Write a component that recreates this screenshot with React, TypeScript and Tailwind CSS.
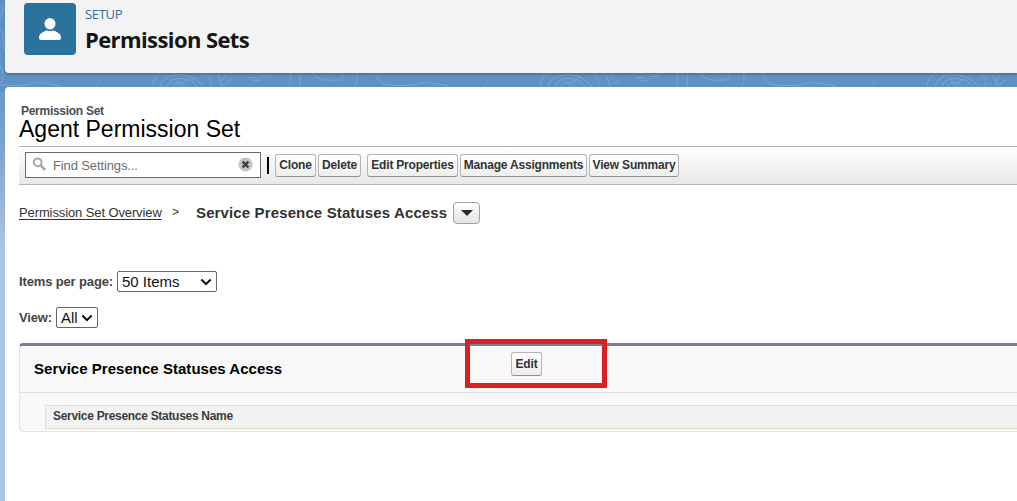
import React from 'react';
import clsx from 'clsx';

const patternTiles = [-104, 284, 671];

const BackgroundPattern = () => (
  <svg className="absolute left-0 top-0" width="1017" height="88" fill="none" stroke="#8db5dc" strokeWidth="1" opacity="0.6">
    {patternTiles.map((x) => (
      <g key={x} transform={`translate(${x} 72)`}>
        <path d="M6 2C8 8 5 11 5 16M17 1C15 6 17 10 16 16" />
        <path d="M28 1C34 8 43 9 54 8C59 7 59 4 58 1" />
        <path d="M72 1C74 6 73 11 70 16" />
        <path d="M90 1C95 8 98 13 105 13C116 14 128 14 137 11C147 10 154 12 165 14" />
        <path d="M205 7C202 9 204 12 200 15" />
        <path d="M256 16C256 9 260 4 264 1M264 16C264 7 274 2 285 3C297 4 303 8 308 16" />
        <path d="M271 16C272 8 280 5 289 7C296 8 299 11 302 16M277 16C277 10 286 8 292 16M280 9L287 15M286 11L294 7" />
        <path d="M312 16C318 11 314 5 309 2M322 2L326 14L336 7M329 4L324 10" />
        <path d="M352 5L359 6M366 5L375 3M357 9L365 8" />
      </g>
    ))}
    <path d="M1 4C5 9 2 15 0 18M0 29C5 35 2 43 5 51M0 66C3 70 4 76 1 84" />
  </svg>
);

interface ButtonProps {
  label: string;
  className?: string;
}

const Button = ({ label, className }: ButtonProps) => (
  <button
    className={clsx(
      'flex shrink-0 items-center justify-center whitespace-nowrap rounded-[3px] border border-[#b5b5b5] border-b-[#8f8f8f] bg-linear-to-b from-white to-[#eeeeee] pb-px text-[12px] font-bold leading-none tracking-[-0.2px] text-[#333333]',
      className
    )}
  >
    {label}
  </button>
);

const Chevron = () => (
  <svg width="12" height="8" viewBox="0 0 12 8" fill="none" stroke="#111111" strokeWidth="2">
    <path d="M1.3 1.5L6 6L10.7 1.5" />
  </svg>
);

const SetupHeader = () => (
  <header className="relative flex h-[73px] rounded-bl-[4px] bg-[#f3f3f3] pl-[19px] pt-[3px] shadow-[0_2px_2px_rgba(70,100,135,0.6)]">
    <div className="flex h-[52px] w-[52px] items-center justify-center rounded-[4px] bg-[#2b739c]">
      <svg width="22" height="22" viewBox="0 0 22 22" fill="white">
        <ellipse cx="11" cy="5.7" rx="5.5" ry="5.7" />
        <path d="M0 19.5C0 15.5 3.4 14.2 7.8 12.2C9.7 13.4 12.3 13.4 14.2 12.2C18.6 14.2 22 15.5 22 19.5C22 21.2 21.3 22 20 22H2C.7 22 0 21.2 0 19.5Z" />
      </svg>
    </div>
    <div className="pl-[9px] font-['Open_Sans',sans-serif]">
      <p className="h-[21px] text-[13px] leading-[22px] tracking-[-0.3px] text-[#2a6f9f]">SETUP</p>
      <h1 className="text-[22px] font-bold leading-[30px] tracking-[-0.6px] text-[#151515]">Permission Sets</h1>
    </div>
  </header>
);

const Toolbar = () => (
  <div className="flex h-[39px] items-start border-y border-[#b4b4b4] bg-linear-to-b from-white to-[#e8e8e8] pl-[6px]">
    <div className="mt-[5px] flex h-[26px] w-[236px] items-center border border-[#6b6b6b] bg-white pl-[6px] pr-[7px]">
      <svg className="-mt-[2px]" width="15" height="15" viewBox="0 0 15 15" fill="none" stroke="#a9a9a9">
        <circle cx="5.7" cy="5.3" r="3.9" strokeWidth="2" />
        <path d="M8.6 8.3L13.2 13" strokeWidth="2.6" />
      </svg>
      <span className="ml-[6px] flex-1 pt-px text-[13px] tracking-[-0.12px] text-[#6d6d6d]">Find Settings...</span>
      <svg className="-mt-[2px]" width="15" height="15" viewBox="0 0 15 15">
        <circle cx="7.5" cy="7.5" r="7" fill="#c4c4c4" />
        <path d="M4.6 4.6L10.4 10.4M10.4 4.6L4.6 10.4" stroke="#404040" strokeWidth="2.4" />
      </svg>
    </div>
    <div className="ml-[6px] mt-[10px] h-[17px] w-[2px] bg-black" />
    <div className="ml-[6px] mt-[7px] flex gap-[2px]">
      <Button label="Clone" className="h-[23px] w-[41px]" />
      <Button label="Delete" className="h-[23px] w-[43px]" />
      <Button label="Edit Properties" className="ml-[4px] h-[23px] w-[91px]" />
      <Button label="Manage Assignments" className="h-[23px] w-[127px]" />
      <Button label="View Summary" className="h-[23px] w-[90px]" />
    </div>
  </div>
);

const Breadcrumb = () => (
  <nav className="mt-[17px] flex h-[22px] items-center text-[#333333]">
    <a className="w-[153px] whitespace-nowrap text-[13px] tracking-[-0.11px] underline underline-offset-2">Permission Set Overview</a>
    <span className="w-[24px] pb-[2px] text-[12px]">&gt;</span>
    <span className="w-[257px] whitespace-nowrap text-[15px] font-bold tracking-[0.13px]">Service Presence Statuses Access</span>
    <button className="flex h-[22px] w-[27px] items-center justify-center rounded-[4px] border border-[#a0a0a0] bg-linear-to-b from-white to-[#e4e4e4]">
      <svg width="12" height="6" viewBox="0 0 12 6" fill="#2b2b2b">
        <path d="M0 0H12L6 6Z" />
      </svg>
    </button>
  </nav>
);

interface SelectProps {
  label: string;
  value: string;
  className: string;
}

const SelectField = ({ label, value, className }: SelectProps) => (
  <div className="flex h-[21px] items-center gap-[4px]">
    <span className="whitespace-nowrap pt-px text-[13px] font-bold tracking-[-0.14px] text-[#444444]">{label}</span>
    <div className={clsx('flex h-[21px] items-center justify-between rounded-[2px] border border-[#666666] bg-white pl-[4px] pr-[4px] text-[15px] leading-none text-[#111111]', className)}>
      <span>{value}</span>
      <Chevron />
    </div>
  </div>
);

const StatusSection = () => (
  <section className="relative mt-[15px] h-[89px] rounded-l-[4px] border-b border-l border-t-[3px] border-b-[#e4e4e4] border-l-[#e4e4e4] border-t-[#747e96] bg-[#f8f8f8]">
    <div className="flex h-[47px] items-center border-b border-[#dddddd] pl-[14px]">
      <h3 className="w-[477px] pt-px text-[15px] font-bold tracking-[0.03px] text-black">Service Presence Statuses Access</h3>
      <Button label="Edit" className="mb-[10px] h-[24px] w-[31px]" />
    </div>
    <div className="ml-[25px] mt-[12px] flex h-[24px] items-center border border-r-0 border-[#dedede] border-b-[#dfe0cc] bg-[#f2f2f2] pb-[2px] pl-[7px] text-[12px] font-bold tracking-[-0.3px] text-[#3c3c3c]">
      Service Presence Statuses Name
    </div>
    <div className="absolute left-[445px] top-[-7px] h-[49px] w-[142px] border-[5px] border-[#d82025]" />
  </section>
);

const App = () => {
  return (
    <div className="relative h-[501px] w-[1017px] overflow-hidden bg-linear-to-b from-[#5c8fc4] from-10% via-[#7da4d0] via-30% to-[#b2c2e1] to-50% pl-[5px] font-['Liberation_Sans',Arial,sans-serif]">
      <div className="absolute left-0 top-0 h-[92px] w-full bg-[#5f91c4]" />
      <BackgroundPattern />
      <SetupHeader />
      <main className="relative mt-[14px] h-[414px] rounded-tl-[4px] bg-white pl-[14px] pt-[17px]">
        <p className="pl-[2px] text-[12px] font-bold leading-[14px] tracking-[-0.28px] text-[#4c4c55]">Permission Set</p>
        <h2 className="h-[28px] text-[23px] leading-[22px] text-black">Agent Permission Set</h2>
        <Toolbar />
        <Breadcrumb />
        <div className="mt-[47px] flex flex-col gap-[15px]">
          <SelectField label="Items per page:" value="50 Items" className="w-[100px]" />
          <SelectField label="View:" value="All" className="w-[42px]" />
        </div>
        <StatusSection />
      </main>
    </div>
  );
};

export default App;
